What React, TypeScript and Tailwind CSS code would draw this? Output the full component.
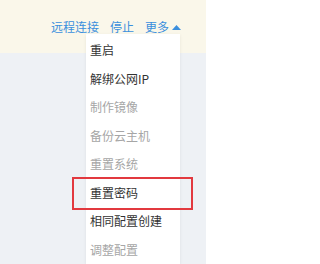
import React from 'react';

const items = [
  { label: '重启', enabled: true },
  { label: '解绑公网IP', enabled: true },
  { label: '制作镜像', enabled: false },
  { label: '备份云主机', enabled: false },
  { label: '重置系统', enabled: false },
  { label: '重置密码', enabled: true, marked: true },
  { label: '相同配置创建', enabled: true },
  { label: '调整配置', enabled: false },
];

export default function App() {
  return (
    <div
      className="relative w-[206px] h-[264px] overflow-hidden bg-[#eef1f5] text-[12px]"
      style={{ fontFamily: '"Noto Sans CJK SC", "Noto Sans", sans-serif' }}
    >
      {/* top band with actions */}
      <div className="h-[53px] bg-[#faf7ea] flex justify-end items-start pt-[18px] pr-[25px]">
        <div className="flex items-center gap-[11px] text-[#3b8fdd] leading-[18px]">
          <span>远程连接</span>
          <span>停止</span>
          <span className="flex items-center gap-[3px]">
            更多
            <svg width="9" height="5" viewBox="0 0 9 5">
              <path d="M0 5 L4.5 0 L9 5 Z" fill="#3b8fdd" />
            </svg>
          </span>
        </div>
      </div>

      {/* dropdown */}
      <div className="absolute left-[86px] top-[34px] w-[94px] bg-white pt-[2px] shadow-[0_1px_3px_rgba(0,0,0,0.08)]">
        {items.map((it) => (
          <div
            key={it.label}
            className={`h-[28.5px] flex items-center pl-[4px] ${it.enabled ? 'text-[#333]' : 'text-[#a6a6a6]'}`}
          >
            {it.label}
          </div>
        ))}
      </div>

      {/* annotation */}
      <div className="absolute left-[72px] top-[177px] w-[121px] h-[33px] border-2 border-[#e2393f]" />
    </div>
  );
}
